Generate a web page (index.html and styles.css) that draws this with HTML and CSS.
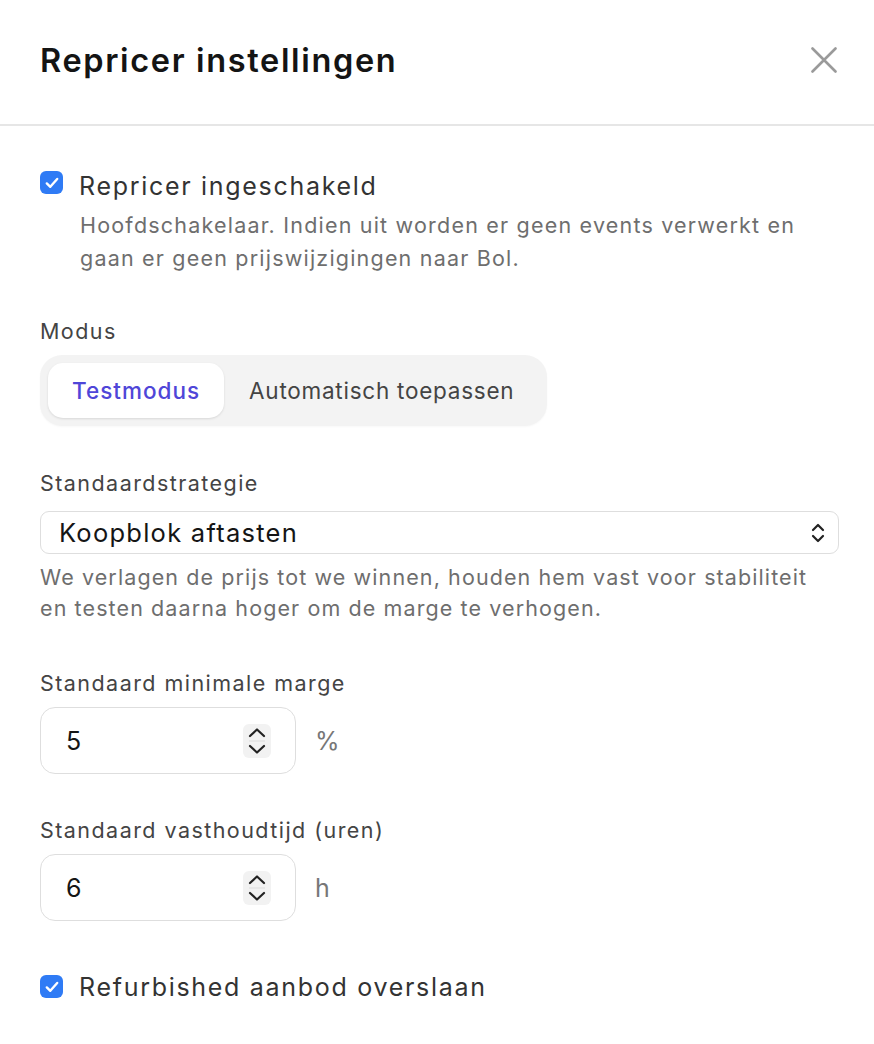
FILE: index.html
```html
<!DOCTYPE html>
<html lang="nl">
<head>
<meta charset="utf-8">
<title>Repricer instellingen</title>
<link rel="stylesheet" href="styles.css">
</head>
<body>
<div class="dialog">
  <header class="header">
    <h1 class="title">Repricer instellingen</h1>
    <button class="close" aria-label="Sluiten">
      <svg width="26" height="26" viewBox="0 0 26 26"><path d="M1.5 1.5 L24.5 24.5 M24.5 1.5 L1.5 24.5" stroke="#9a9a9a" stroke-width="2.6" stroke-linecap="round" fill="none"/></svg>
    </button>
  </header>
  <main class="content">
    <div class="check-row">
      <span class="checkbox">
        <svg width="14" height="12" viewBox="0 0 14 12"><path d="M1.8 6.4 L5.3 9.8 L12.2 2" stroke="#fff" stroke-width="2.4" stroke-linecap="round" stroke-linejoin="round" fill="none"/></svg>
      </span>
      <span class="check-label">Repricer ingeschakeld</span>
    </div>
    <p class="check-desc">Hoofdschakelaar. Indien uit worden er geen events verwerkt en gaan er geen prijswijzigingen naar Bol.</p>

    <div class="field field-modus">
      <div class="label">Modus</div>
      <div class="segmented">
        <span class="seg seg-active">Testmodus</span>
        <span class="seg">Automatisch toepassen</span>
      </div>
    </div>

    <div class="field field-strategy">
      <div class="label">Standaardstrategie</div>
      <div class="select">
        <span class="select-value">Koopblok aftasten</span>
        <svg width="16" height="24" viewBox="0 0 16 24"><path d="M3 9 L8 4 L13 9 M3 15 L8 20 L13 15" stroke="#222" stroke-width="2.2" stroke-linecap="round" stroke-linejoin="round" fill="none"/></svg>
      </div>
      <p class="help">We verlagen de prijs tot we winnen, houden hem vast voor stabiliteit en testen daarna hoger om de marge te verhogen.</p>
    </div>

    <div class="field field-margin">
      <div class="label">Standaard minimale marge</div>
      <div class="number-row">
        <div class="number">
          <span class="number-value">5</span>
          <span class="spinner">
            <svg width="28" height="34" viewBox="0 0 28 34"><path d="M7 12 L14 5.5 L21 12 M7 22 L14 28.5 L21 22" stroke="#222" stroke-width="2.2" stroke-linecap="round" stroke-linejoin="round" fill="none"/><path d="M6 17 H22" stroke="#dcdcdc" stroke-width="1"/></svg>
          </span>
        </div>
        <span class="unit">%</span>
      </div>
    </div>

    <div class="field field-hold">
      <div class="label">Standaard vasthoudtijd (uren)</div>
      <div class="number-row">
        <div class="number">
          <span class="number-value">6</span>
          <span class="spinner">
            <svg width="28" height="34" viewBox="0 0 28 34"><path d="M7 12 L14 5.5 L21 12 M7 22 L14 28.5 L21 22" stroke="#222" stroke-width="2.2" stroke-linecap="round" stroke-linejoin="round" fill="none"/><path d="M6 17 H22" stroke="#dcdcdc" stroke-width="1"/></svg>
          </span>
        </div>
        <span class="unit unit-h">h</span>
      </div>
    </div>

    <div class="check-row check-row-last">
      <span class="checkbox">
        <svg width="14" height="12" viewBox="0 0 14 12"><path d="M1.8 6.4 L5.3 9.8 L12.2 2" stroke="#fff" stroke-width="2.4" stroke-linecap="round" stroke-linejoin="round" fill="none"/></svg>
      </span>
      <span class="check-label">Refurbished aanbod overslaan</span>
    </div>
  </main>
</div>
</body>
</html>
```

FILE: styles.css
```css
* { box-sizing: border-box; }
html, body {
  margin: 0;
  padding: 0;
  background: #fff;
}
body {
  font-family: Inter, "Noto Sans", "Liberation Sans", sans-serif;
  color: #333;
}
.dialog {
  width: 874px;
  min-height: 1044px;
}
.header {
  height: 126px;
  display: flex;
  align-items: center;
  justify-content: space-between;
  padding: 0 37px 4px 40px;
  border-bottom: 2px solid #e6e6e6;
}
.title {
  margin: 0;
  font-size: 32.5px;
  font-weight: 600;
  color: #141414;
  letter-spacing: 1.65px;
}
.close {
  border: 0;
  background: none;
  padding: 0;
  width: 26px;
  height: 26px;
  display: flex;
}
.content {
  padding: 44px 35px 0 40px;
}
.check-row {
  display: flex;
  align-items: flex-start;
  gap: 16px;
  height: 32px;
}
.checkbox {
  width: 23px;
  height: 23px;
  border-radius: 6px;
  background: #2f7bf5;
  display: flex;
  align-items: center;
  justify-content: center;
  flex: none;
  margin-top: 1px;
}
.check-label {
  font-size: 25px;
  line-height: 32px;
  color: #333;
  letter-spacing: 1.7px;
}
.check-desc {
  margin: 7px 0 0 40px;
  font-size: 21.5px;
  line-height: 33px;
  color: #6e6e6e;
  letter-spacing: 1.2px;
}
.field-modus { margin-top: 41px; }
.field-strategy { margin-top: 42px; }
.field-margin { margin-top: 44px; }
.field-hold { margin-top: 41px; }
.label {
  font-size: 21.5px;
  line-height: 30px;
  color: #444;
  letter-spacing: 1.45px;
}
.segmented {
  margin-top: 9px;
  display: inline-flex;
  align-items: center;
  padding: 8px;
  background: #f3f3f3;
  border-radius: 22px;
  height: 71px;
  box-shadow: 0 1px 2px rgba(0,0,0,0.03);
}
.seg {
  height: 55px;
  display: flex;
  align-items: center;
  padding: 0 25px;
  font-size: 22.5px;
  font-weight: 420;
  color: #444;
  border-radius: 15px;
  letter-spacing: 0.75px;
}
.seg-active {
  background: #fff;
  color: #4f46d8;
  font-weight: 500;
  letter-spacing: 1px;
  padding: 0 24px;
  box-shadow: 0 1px 3px rgba(0,0,0,0.08), 0 1px 2px rgba(0,0,0,0.04);
}
.select {
  margin-top: 13px;
  height: 43px;
  border: 1.5px solid #dedede;
  border-radius: 9px;
  display: flex;
  align-items: center;
  justify-content: space-between;
  padding: 0 12px 0 18px;
}
.select-value {
  font-size: 25.5px;
  color: #151515;
  letter-spacing: 1.25px;
}
.help {
  margin: 8px 0 0 0;
  font-size: 21.5px;
  line-height: 31px;
  color: #6e6e6e;
  letter-spacing: 1.1px;
}
.number-row {
  margin-top: 9px;
  display: flex;
  align-items: center;
  gap: 19px;
}
.number {
  width: 256px;
  height: 67px;
  border: 1.5px solid #dedede;
  border-radius: 15px;
  display: flex;
  align-items: center;
  justify-content: space-between;
  padding: 0 24px 0 25px;
}
.number-value {
  font-size: 25px;
  color: #151515;
}
.spinner {
  width: 28px;
  height: 34px;
  background: #f2f2f2;
  border-radius: 6px;
  display: flex;
}
.unit {
  font-size: 25px;
  color: #777;
}
.check-row-last {
  margin-top: 50px;
}
.check-row-last .checkbox {
  margin-top: 4px;
}
```
